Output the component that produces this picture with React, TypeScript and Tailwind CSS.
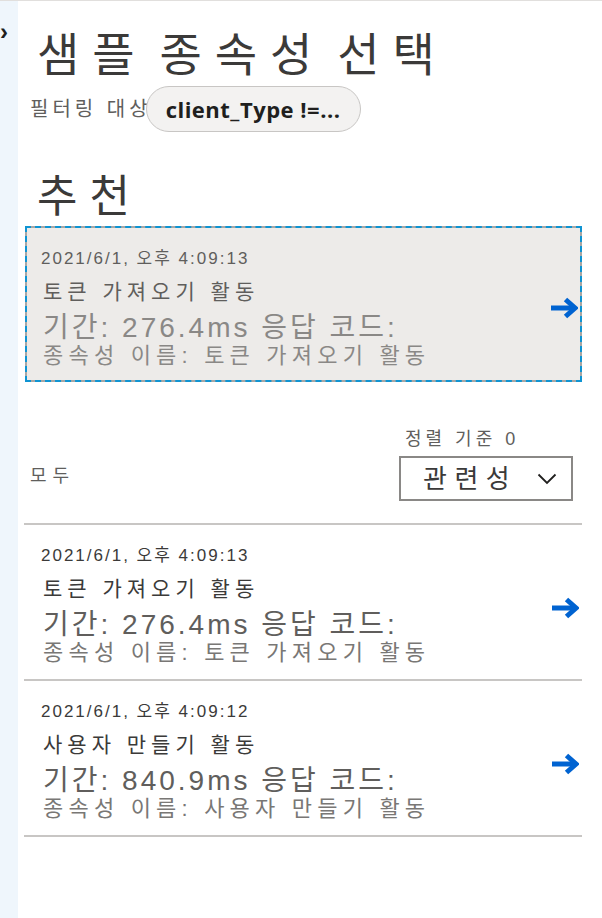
import React from 'react'

type Dep = {
  time: string
  title: string
  duration: string
  name: string
}

const FONT = { fontFamily: '"Liberation Sans", "Noto Sans CJK KR", sans-serif' }

const recommended: Dep = {
  time: '2021/6/1, 오후 4:09:13',
  title: '토큰 가져오기 활동',
  duration: '276.4ms',
  name: '토큰 가져오기 활동',
}

const all: Dep[] = [
  { time: '2021/6/1, 오후 4:09:13', title: '토큰 가져오기 활동', duration: '276.4ms', name: '토큰 가져오기 활동' },
  { time: '2021/6/1, 오후 4:09:12', title: '사용자 만들기 활동', duration: '840.9ms', name: '사용자 만들기 활동' },
]

function Arrow() {
  return (
    <svg width="28" height="22" viewBox="0 0 28 22" fill="none" className="shrink-0">
      <path d="M1 11H24" stroke="#0063d1" strokeWidth="5" />
      <path d="M15.5 2.5L25 11L15.5 19.5" stroke="#0063d1" strokeWidth="5" strokeLinejoin="miter" />
    </svg>
  )
}

function DepText({ dep, muted }: { dep: Dep; muted?: boolean }) {
  return (
    <div className="flex flex-col">
      <div className={`text-[17px] leading-[20px] tracking-[2px] ${muted ? 'text-[#605e5c]' : 'text-[#3b3a39]'}`}>
        {dep.time}
      </div>
      <div className={`mt-[10px] pl-[2px] text-[21px] leading-[26px] tracking-[5px] ${muted ? 'text-[#605e5c]' : 'text-[#3b3a39]'}`}>
        {dep.title}
      </div>
      <div className={`mt-[7px] pl-[2px] text-[28px] leading-[32px] tracking-[3px] ${muted ? 'text-[#8a8886]' : 'text-[#605e5c]'}`}>
        기간: {dep.duration} 응답 코드:
      </div>
      <div className={`mt-[-1px] pl-[2px] text-[22px] leading-[26px] tracking-[5.2px] ${muted ? 'text-[#8a8886]' : 'text-[#797775]'}`}>
        종속성 이름: {dep.name}
      </div>
    </div>
  )
}

export default function App() {
  return (
    <div className="flex min-h-[918px] w-[602px] border-t border-[#e1dfdd] bg-white" style={FONT}>
      {/* 접힌 사이드 패널 */}
      <div className="w-[18px] shrink-0 bg-[#eff6fc] pt-[19px]">
        <span className="block text-[24px] font-bold leading-[24px] text-[#201f1e]">›</span>
      </div>

      <div className="flex flex-1 flex-col pl-[6px] pr-[20px]">
        <h1 className="mt-[28px] pl-[13px] text-[46px] leading-[52px] tracking-[13px] text-[#3b3a39] [word-spacing:-14px]">
          샘플 종속성 선택
        </h1>

        <div className="mt-[5px] flex items-center pl-[6px]">
          <span className="text-[20px] leading-[24px] tracking-[4px] text-[#605e5c]">필터링 대상</span>
          <span
            className="ml-[-6px] flex h-[46px] w-[215px] items-center justify-center rounded-full border-[1.5px] border-[#c8c6c4] bg-[#f3f2f1] text-[22px] font-bold tracking-[0.5px] text-[#201f1e]"
            style={{ fontFamily: '"Open Sans", "Noto Sans", sans-serif' }}
          >
            client_Type !=...
          </span>
        </div>

        <h2 className="mt-[40px] pl-[13px] text-[44px] leading-[50px] tracking-[12px] text-[#3b3a39]">추천</h2>

        {/* 추천 카드 */}
        <div className="mt-[4px] ml-[1px] bg-[#a8a6a4]">
          <div className="flex h-[156px] items-start justify-between border-2 border-dashed border-[#0f94d2] bg-[#edebe9] bg-clip-padding pl-[14px] pr-[2px] pt-[21px]">
            <DepText dep={recommended} muted />
            <div className="mt-[-14px] self-center">
              <Arrow />
            </div>
          </div>
        </div>

        <div className="mt-[46px] flex items-end justify-between pr-[9px]">
          <span className="mb-[14px] pl-[6px] text-[18px] leading-[22px] tracking-[6px] text-[#605e5c]">모두</span>
          <div className="flex flex-col">
            <span className="pl-[6px] text-[18px] leading-[22px] tracking-[4px] text-[#605e5c]">정렬 기준 0</span>
            <div className="mt-[6px] flex h-[45px] w-[174px] items-center justify-between border-2 border-[#8a8886] pl-[22px] pr-[14px]">
              <span className="text-[26px] leading-[30px] tracking-[7.5px] text-[#3b3a39]">관련성</span>
              <svg width="20" height="12" viewBox="0 0 20 12" fill="none">
                <path d="M1.5 1.5L10 10L18.5 1.5" stroke="#201f1e" strokeWidth="1.8" />
              </svg>
            </div>
          </div>
        </div>

        {/* 전체 목록 */}
        <div className="mt-[22px] flex flex-col border-b-2 border-[#c8c6c4]">
          {all.map((dep, i) => (
            <div key={i} className="flex h-[156px] items-start justify-between border-t-2 border-[#c8c6c4] pl-[17px] pr-[3px] pt-[21px]">
              <DepText dep={dep} />
              <div className="mt-[-9px] self-center">
                <Arrow />
              </div>
            </div>
          ))}
        </div>
      </div>
    </div>
  )
}
